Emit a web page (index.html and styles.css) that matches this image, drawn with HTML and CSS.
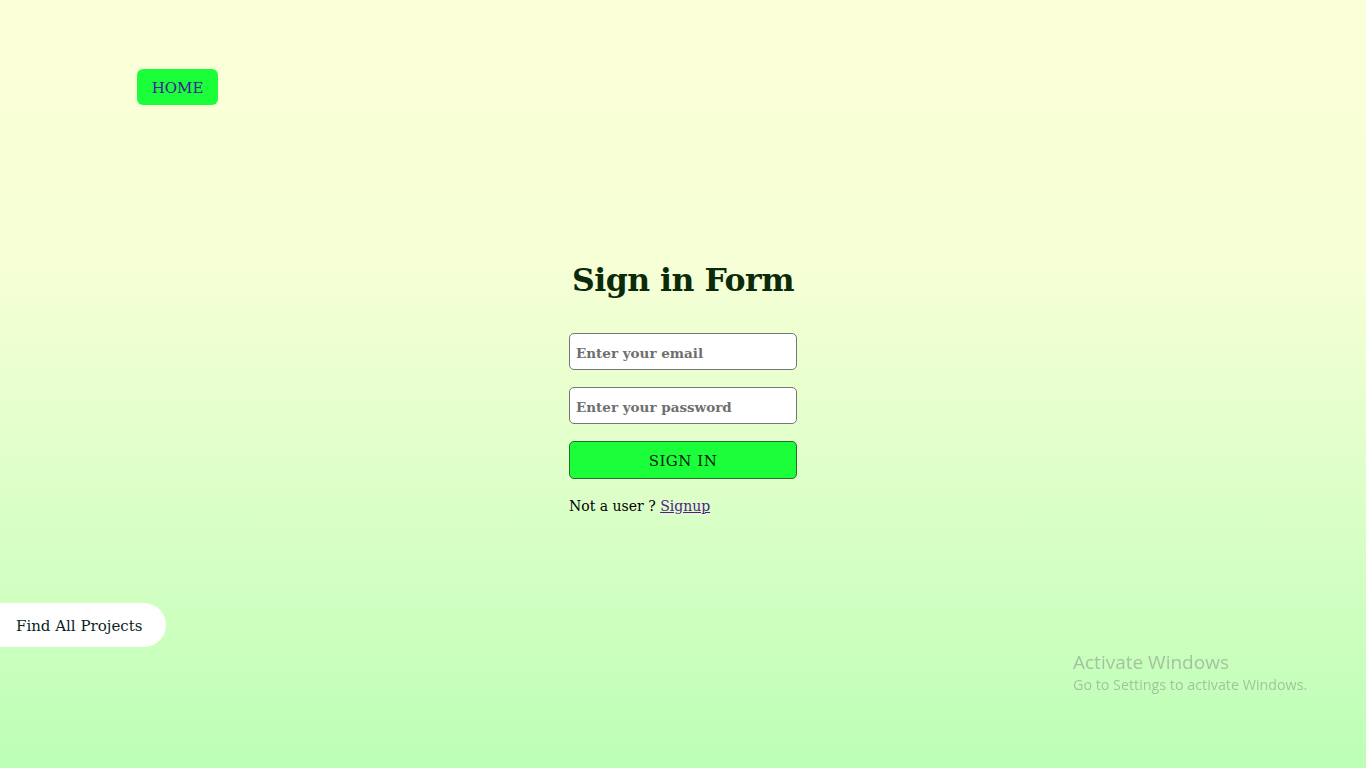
FILE: index.html
```html
<!DOCTYPE html>
<html lang="en">
<head>
<meta charset="utf-8">
<title>Sign in</title>
<link rel="stylesheet" href="styles.css">
</head>
<body>
<div class="page">
  <nav class="topbar">
    <a class="home-btn" href="#">HOME</a>
  </nav>
  <main class="main">
    <form class="signin">
      <h1 class="title">Sign in Form</h1>
      <input class="field" type="email" placeholder="Enter your email">
      <input class="field" type="password" placeholder="Enter your password">
      <button class="submit" type="button">SIGN IN</button>
      <p class="note">Not a user ? <a href="#" class="link">Signup</a></p>
    </form>
  </main>
</div>
<a class="projects" href="#">Find All Projects</a>
<div class="watermark">
  <div class="wm-title">Activate Windows</div>
  <div class="wm-sub">Go to Settings to activate Windows.</div>
</div>
</body>
</html>
```
FILE: styles.css
```css
* { box-sizing: border-box; }
html, body { margin: 0; height: 100%; }
body {
  font-family: "DejaVu Serif", "Liberation Serif", serif;
  background: linear-gradient(to bottom, #fbffd8 0%, #f6ffd6 35%, #bcffb6 100%);
  min-height: 768px;
  overflow: hidden;
}
.page { display: flex; flex-direction: column; }
.topbar { padding: 69px 0 0 137px; }
.home-btn {
  display: inline-flex; align-items: center; justify-content: center;
  width: 81px; height: 36px;
  padding-top: 2px;
  background: #1aff3a;
  color: #3b2296;
  border-radius: 6px;
  text-decoration: none;
  font-size: 15px;
}
.main { display: flex; justify-content: center; padding-top: 154px; }
.signin { width: 228px; display: flex; flex-direction: column; }
.title {
  margin: 0 -40px 32px;
  text-align: center;
  font-size: 31.5px;
  font-weight: 700;
  color: #0b2a0a;
  line-height: 42px;
  letter-spacing: -0.5px;
}
.field {
  height: 37px; width: 228px;
  border: 1px solid #767676;
  border-radius: 5px;
  background: #fff;
  padding: 2px 6px 0;
  font-family: inherit;
  font-size: 13.5px;
  margin-bottom: 17px;
}
.field::placeholder { color: #6f6f6f; font-weight: 700; }
.submit {
  height: 38px; width: 228px;
  margin-top: 0;
  padding-top: 2px;
  background: #1aff3a;
  border: 1px solid #2a6b2e;
  border-radius: 5px;
  font-family: inherit;
  font-size: 15px;
  letter-spacing: 0.5px;
  color: #0b1a0b;
}
.note { margin: 19px 0 0; font-size: 14px; color: #000; }
.link { color: #551a8b; }
.projects {
  position: fixed; left: 0; top: 603px;
  width: 166px; height: 44px;
  background: #fff;
  border-radius: 0 22px 22px 0;
  display: flex; align-items: center;
  padding: 2px 0 0 16px;
  color: #0b1f1f;
  text-decoration: none;
  font-size: 15px;
}
.watermark {
  position: fixed; left: 1073px; top: 650px;
  font-family: "Open Sans", "Liberation Sans", sans-serif;
  color: rgba(120,120,120,0.45);
}
.wm-title { font-size: 19px; line-height: 24px; }
.wm-sub { font-size: 14.3px; line-height: 22px; }
```
